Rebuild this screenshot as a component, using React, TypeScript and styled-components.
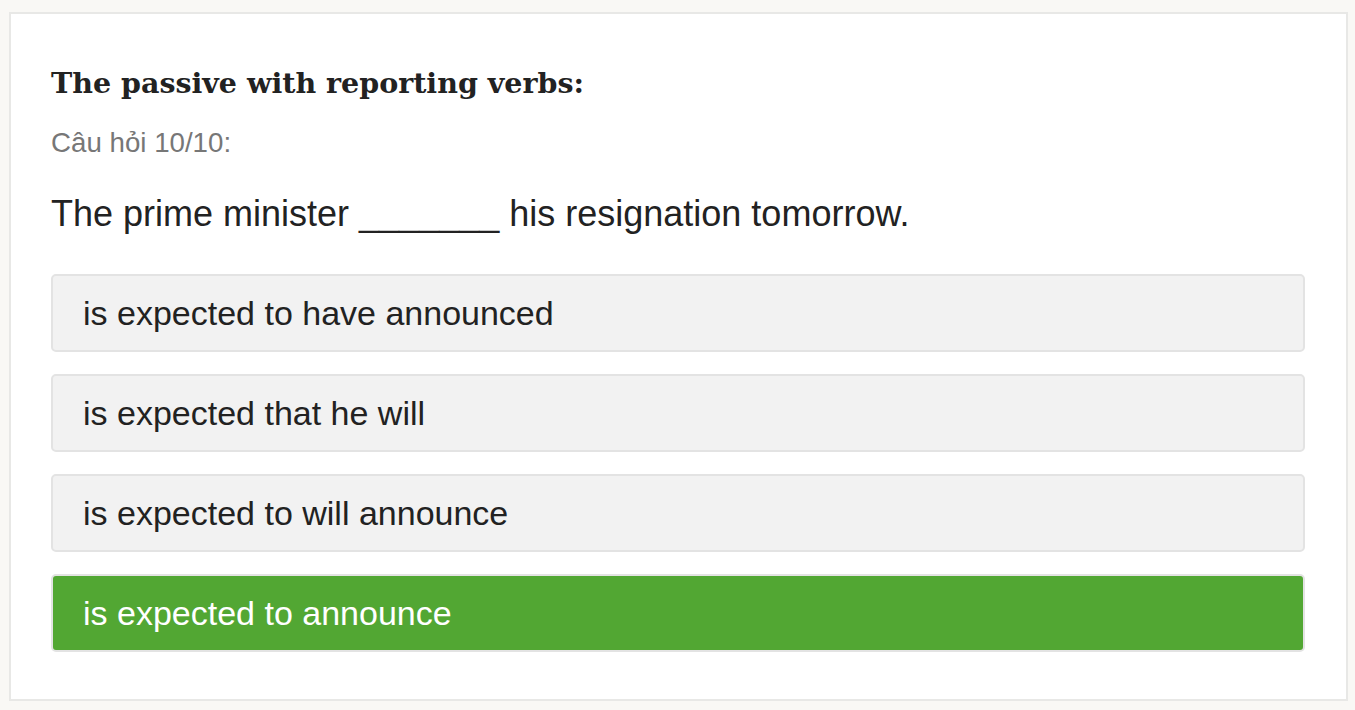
import React from "react";
import styled, { createGlobalStyle } from "styled-components";

const GlobalStyle = createGlobalStyle`
  html, body {
    margin: 0;
    padding: 0;
    background: #f9f8f5;
  }
  * {
    box-sizing: border-box;
  }
`;

const Page = styled.div`
  padding: 12px 7px 9px 9px;
  font-family: "Liberation Sans", Arial, sans-serif;
  color: #222;
`;

const QuizCard = styled.section`
  background: #fff;
  border: 2px solid #e8e8e6;
  padding: 51px 41px 47px 40px;
`;

const Title = styled.h2`
  margin: 0;
  font-family: "DejaVu Serif", "Liberation Serif", serif;
  font-weight: bold;
  font-size: 28.5px;
  line-height: 36px;
  color: #222;
`;

const Counter = styled.div`
  margin-top: 24px;
  font-size: 27.7px;
  line-height: 36px;
  color: #777;
`;

const Question = styled.p`
  margin: 29px 0 0;
  font-size: 36px;
  line-height: 48px;
  color: #222;
`;

const OptionList = styled.ul`
  list-style: none;
  margin: 36px 0 0;
  padding: 0;
  display: flex;
  flex-direction: column;
  gap: 22px;
`;

const Option = styled.li<{ $correct?: boolean }>`
  border: 2px solid #e3e3e3;
  border-radius: 5px;
  padding: 12px 30px;
  font-size: 34px;
  line-height: 50px;
  background: ${(p) => (p.$correct ? "#52a733" : "#f2f2f2")};
  color: ${(p) => (p.$correct ? "#fff" : "#222")};
  cursor: pointer;
`;

const options = [
  { text: "is expected to have announced" },
  { text: "is expected that he will" },
  { text: "is expected to will announce" },
  { text: "is expected to announce", correct: true },
];

const App = () => {
  return (
    <Page>
      <GlobalStyle />
      <QuizCard>
        <Title>The passive with reporting verbs:</Title>
        <Counter>Câu hỏi 10/10:</Counter>
        <Question>The prime minister _______ his resignation tomorrow.</Question>
        <OptionList>
          {options.map((o) => (
            <Option key={o.text} $correct={o.correct}>
              {o.text}
            </Option>
          ))}
        </OptionList>
      </QuizCard>
    </Page>
  );
};

export default App;
